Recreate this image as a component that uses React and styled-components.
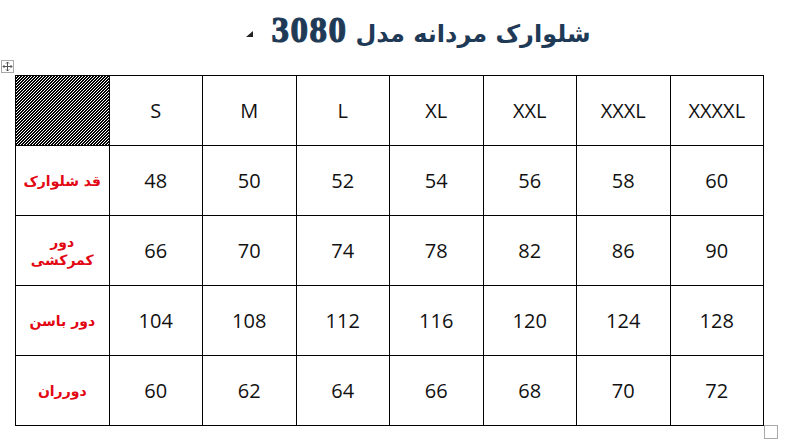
import React from 'react'
import styled, { createGlobalStyle } from 'styled-components'

const GlobalStyle = createGlobalStyle`
  html, body {
    margin: 0;
    padding: 0;
    background: #ffffff;
  }
  body {
    font-family: "Liberation Sans", "DejaVu Sans", sans-serif;
  }
`

const Page = styled.div`
  position: relative;
  width: 789px;
  height: 440px;
  background: #fff;
  overflow: hidden;
`

const Header = styled.div`
  height: 62px;
  display: flex;
  align-items: center;
  justify-content: center;
  gap: 18px;
  padding-left: 48px;
  box-sizing: border-box;
`

const Marker = styled.span`
  width: 0;
  height: 0;
  border-left: 7px solid transparent;
  border-bottom: 6px solid #222;
  margin-top: 6px;
`

const Title = styled.h1`
  margin: 0;
  direction: rtl;
  display: flex;
  align-items: baseline;
  gap: 8px;
  font-weight: bold;
  color: #1f3a56;
`

const TitleText = styled.span`
  font-family: "DejaVu Sans", sans-serif;
  font-weight: bold;
  font-size: 24px;
`

const TitleNumber = styled.span`
  font-family: "Liberation Serif", "DejaVu Serif", serif;
  font-weight: 700;
  font-size: 35px;
  letter-spacing: 1.5px;
  -webkit-text-stroke: 1.1px #1f3a56;
`

const MoveHandle = styled.div`
  position: absolute;
  left: 1px;
  top: 60px;
  width: 11px;
  height: 11px;
  border: 1px solid #a8a8a8;
  display: flex;
  align-items: center;
  justify-content: center;
  background: #fff;
`

const ResizeHandle = styled.div`
  position: absolute;
  left: 764px;
  top: 425px;
  width: 12px;
  height: 12px;
  border: 1px solid #a8a8a8;
  background: #fff;
`

const Grid = styled.div`
  margin-left: 15px;
  margin-top: 13px;
  width: 749px;
  box-sizing: border-box;
  display: grid;
  grid-template-columns: repeat(8, 1fr);
  grid-auto-rows: 70px;
  border-left: 1px solid #000;
  border-top: 1px solid #000;
`

const Cell = styled.div`
  border-right: 1px solid #000;
  border-bottom: 1px solid #000;
  display: flex;
  align-items: center;
  justify-content: center;
  font-family: "Open Sans", "Liberation Sans", sans-serif;
  font-size: 20px;
  color: #111;
`

const Hatch = styled(Cell)`
  background-image: linear-gradient(
    -45deg,
    #000 25%,
    #fff 25%,
    #fff 50%,
    #000 50%,
    #000 75%,
    #fff 75%
  );
  background-size: 3px 3px;
`

const Label = styled(Cell)`
  direction: rtl;
  text-align: center;
  font-family: "DejaVu Sans", sans-serif;
  font-weight: bold;
  font-size: 14px;
  line-height: 18px;
  color: #e30613;
  padding: 0 6px;
`

const sizes = ['S', 'M', 'L', 'XL', 'XXL', 'XXXL', 'XXXXL']

const rows = [
  { label: 'قد شلوارک', values: [48, 50, 52, 54, 56, 58, 60] },
  { label: ['دور', 'کمرکشی'], values: [66, 70, 74, 78, 82, 86, 90] },
  { label: 'دور باسن', values: [104, 108, 112, 116, 120, 124, 128] },
  { label: 'دورران', values: [60, 62, 64, 66, 68, 70, 72] },
]

const MoveIcon = () => (
  <svg width="11" height="11" viewBox="0 0 11 11" fill="none" stroke="#555" strokeWidth="1">
    <path d="M5.5 1v9M1 5.5h9" />
    <path d="M4 2.5l1.5-1.5 1.5 1.5M4 8.5l1.5 1.5 1.5-1.5M2.5 4L1 5.5 2.5 7M8.5 4l1.5 1.5L8.5 7" />
  </svg>
)

const App = () => {
  return (
    <Page>
      <GlobalStyle />
      <Header>
        <Marker />
        <Title>
          <TitleText>شلوارک مردانه مدل</TitleText>
          <TitleNumber>3080</TitleNumber>
        </Title>
      </Header>

      <MoveHandle>
        <MoveIcon />
      </MoveHandle>

      <Grid>
        <Hatch />
        {sizes.map((s) => (
          <Cell key={s}>{s}</Cell>
        ))}

        {rows.map((row, i) => (
          <React.Fragment key={i}>
            <Label>
              {Array.isArray(row.label) ? (
                <span>
                  {row.label[0]}
                  <br />
                  {row.label[1]}
                </span>
              ) : (
                row.label
              )}
            </Label>
            {row.values.map((v, j) => (
              <Cell key={j}>{v}</Cell>
            ))}
          </React.Fragment>
        ))}
      </Grid>

      <ResizeHandle />
    </Page>
  )
}

export default App
